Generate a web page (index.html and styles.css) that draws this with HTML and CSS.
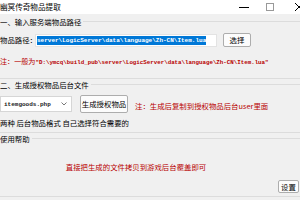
FILE: index.html
```html
<!DOCTYPE html>
<html lang="zh">
<head>
<meta charset="utf-8">
<title>幽冥传奇物品提取</title>
<link rel="stylesheet" href="styles.css">
</head>
<body>
<div class="window">
  <div class="titlebar">
    <span class="title">幽冥传奇物品提取</span>
    <div class="controls">
      <svg class="ctl" width="10" height="10" viewBox="0 0 10 10"><path d="M0 5.5H10" stroke="#000" stroke-width="1"/></svg>
      <svg class="ctl" width="8" height="8" viewBox="0 0 8 8"><rect x="0.5" y="0.5" width="7" height="7" fill="none" stroke="#999" stroke-width="1"/></svg>
      <svg class="ctl close" width="8" height="8" viewBox="0 0 8 8"><path d="M0 0L8 8M8 0L0 8" stroke="#000" stroke-width="1"/></svg>
    </div>
  </div>
  <div class="content">
    <section class="group g1">
      <div class="group-head"><span class="legend">一、输入服务端物品路径</span><span class="rule"></span></div>
      <div class="path-row">
        <span class="label">物品路径：</span>
        <div class="input"><span class="sel">server\LogicServer\data\language\Zh-CN\Item.lua</span></div>
        <button class="btn btn-choose">选择</button>
      </div>
      <p class="note note1">注：一般为<span class="mono">"D:\ymcq\build_pub\server\LogicServer\data\language\Zh-CN\Item.lua"</span></p>
    </section>
    <section class="group g2">
      <div class="group-head"><span class="legend">二、生成授权物品后台文件</span><span class="rule"></span></div>
      <div class="gen-row">
        <div class="combo"><span class="mono">itemgoods.php</span><svg width="6" height="4" viewBox="0 0 6 4"><path d="M0.5 0.5L3 3L5.5 0.5" fill="none" stroke="#555" stroke-width="0.8"/></svg></div>
        <button class="btn btn-gen">生成授权物品</button>
        <span class="note note2">注：生成后复制到授权物品后台user里面</span>
      </div>
      <p class="hint">两种 后台物品格式 自己选择符合需要的</p>
    </section>
    <section class="group g3">
      <div class="group-head"><span class="legend">使用帮助</span><span class="rule"></span></div>
      <p class="note help">直接把生成的文件拷贝到游戏后台覆盖即可</p>
      <div class="foot-row"><button class="btn btn-set">设置</button></div>
    </section>
    <div class="bottom"></div>
  </div>
</div>
</body>
</html>
```

FILE: styles.css
```css
* { box-sizing: border-box; }
html, body { margin: 0; padding: 0; }
body {
  width: 300px;
  height: 200px;
  overflow: hidden;
  background: #f0f0f0;
  font-family: "Noto Sans CJK SC", "Noto Sans", sans-serif;
  font-size: 7.4px;
  color: #000;
}
.window { width: 300px; height: 200px; display: flex; flex-direction: column; overflow: hidden; }
.titlebar {
  height: 16px;
  background: #fff;
  display: flex;
  align-items: center;
  justify-content: space-between;
}
.title { font-size: 7.6px; line-height: 10px; }
.controls { display: flex; align-items: center; margin-right: -3px; }
.ctl { display: block; }
.controls .ctl:nth-child(1) { margin-right: 17px; }
.controls .ctl:nth-child(2) { margin-right: 21px; }
.content { flex: 1; display: flex; flex-direction: column; }
.group { border-bottom: 1px solid #dcdcdc; }
.group-head { display: flex; align-items: center; }
.legend { line-height: 10px; white-space: nowrap; margin-right: 2px; }
.rule { flex: 1; height: 1px; background: #dcdcdc; }
.g1 .group-head { height: 15px; }
.path-row { display: flex; align-items: center; height: 14px; margin-top: 4px; }
.label { line-height: 10px; width: 35px; white-space: nowrap; }
.input {
  width: 182px;
  height: 13px;
  background: #fff;
  border: 1px solid #e3e3e3;
  display: flex;
  align-items: center;
  padding-left: 1px;
  overflow: hidden;
}
.sel {
  background: #0078d7;
  color: #fff;
  font-family: "Liberation Mono", "DejaVu Sans Mono", monospace;
  font-size: 6px;
  font-weight: bold;
  line-height: 9px;
  white-space: nowrap;
}
.btn {
  font-family: inherit;
  font-size: 7.4px;
  line-height: 10px;
  padding: 0;
  background: #fcfcfc;
  border: 1px solid #adadad;
  border-radius: 2px;
  color: #000;
}
.btn-choose { width: 28px; height: 14px; margin-left: 6px; }
.mono { font-family: "Liberation Mono", "DejaVu Sans Mono", monospace; font-size: 6px; }
.note { color: #b80000; margin: 0; line-height: 10px; white-space: nowrap; }
.note1 { margin-top: 9px; padding-bottom: 10px; font-size: 7.1px; }
.note1 .mono { font-weight: bold; font-size: 5.8px; }
.g2 .group-head { height: 11px; }
.gen-row { display: flex; align-items: center; height: 18px; margin-top: 5px; }
.combo {
  width: 72px;
  height: 16px;
  background: #fff;
  border: 1px solid #d6d6d6;
  display: flex;
  align-items: center;
  justify-content: space-between;
  padding: 0 4px 0 3px;
}
.combo .mono { font-weight: bold; color: #222; }
.btn-gen { width: 48px; height: 18px; margin-left: 8px; }
.note2 { margin-left: 7px; margin-top: 4px; }
.hint { margin: 5px 0 0; line-height: 10px; white-space: nowrap; padding-bottom: 4px; }
.g3 .group-head { height: 11px; }
.help { margin-top: 18px; text-align: center; padding-right: 28px; }
.foot-row { display: flex; justify-content: flex-end; margin-top: 8px; padding-bottom: 3px; }
.btn-set { width: 21px; height: 13px; margin-right: 1px; }
.bottom { flex: 1; border-top: 3px solid #f0f0f0; background: #b0b0b0; }
```
